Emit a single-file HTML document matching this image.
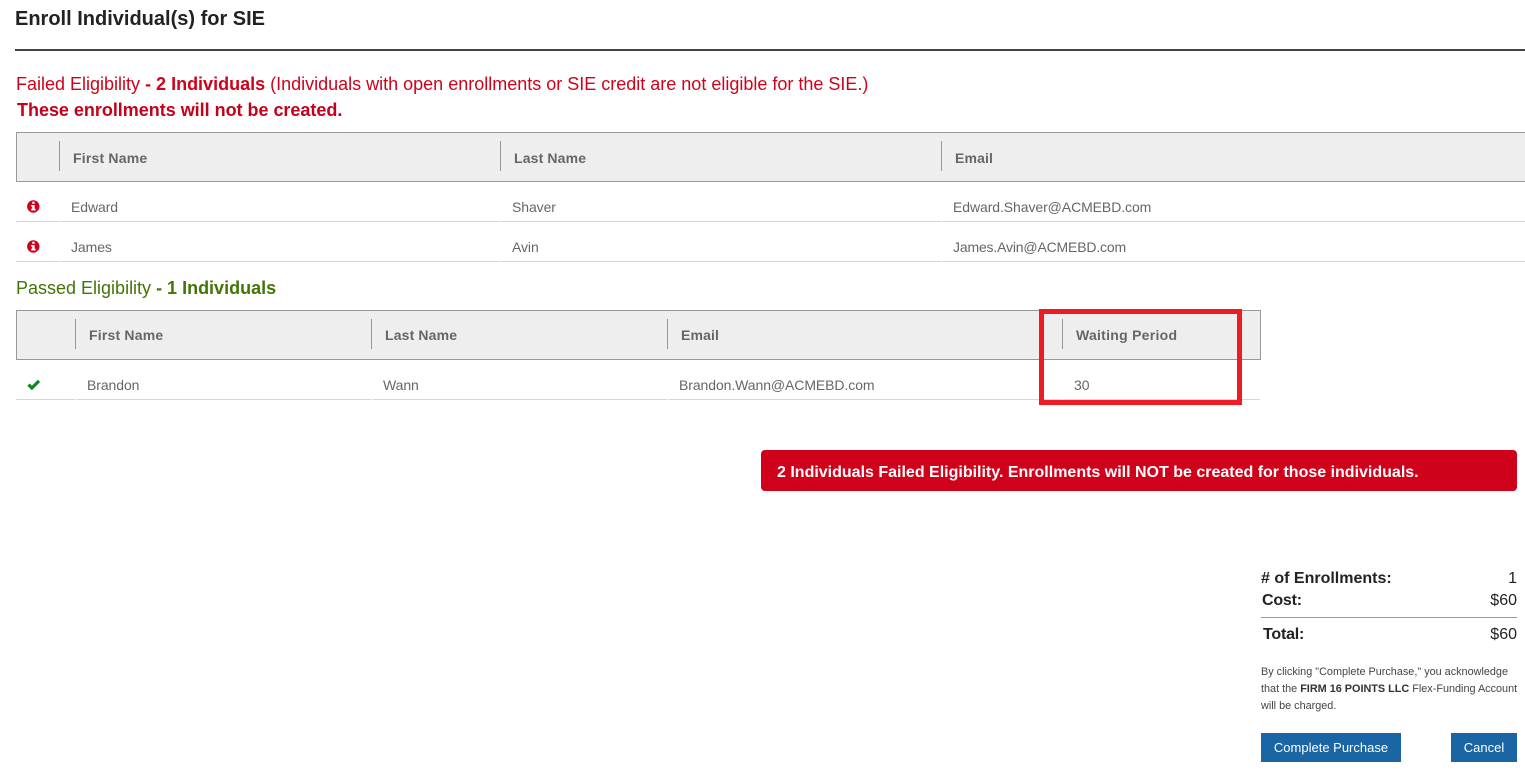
<!DOCTYPE html>
<html><head><meta charset="utf-8">
<style>
html,body{margin:0;padding:0;background:#fff;width:1525px;height:778px;overflow:hidden;font-family:"Liberation Sans",Arial,sans-serif}
.a{position:absolute;white-space:nowrap}
.h{position:absolute;background:#eee;border:1px solid #999;box-sizing:border-box}
.s{position:absolute;width:1px;height:30px;background:#999}
.th{position:absolute;white-space:nowrap;font-size:14px;font-weight:bold;color:#666;line-height:16px;letter-spacing:.15px}
.td{position:absolute;white-space:nowrap;font-size:14px;color:#666;line-height:16px;letter-spacing:-.08px}
.l{position:absolute;height:1px;background:#d5d5d5}
b{font-weight:bold}
.btn{position:absolute;background:#1a65a3;color:#fff;font-size:13px;text-align:center;height:29px;line-height:29px;top:733px}
</style></head><body>
<div class="a" style="left:15px;top:8px;font-size:20px;font-weight:bold;line-height:22px;color:#222">Enroll Individual(s) for SIE</div>
<div class="a" style="left:15px;top:49px;width:1510px;height:2px;background:#444"></div>

<div class="a" style="left:16px;top:73px;font-size:18px;line-height:22px;color:#d0021b">Failed Eligibility <b>- 2 Individuals</b> (Individuals with open enrollments or SIE credit are not eligible for the SIE.)</div>
<div class="a" style="left:17px;top:99px;font-size:18px;line-height:22px;font-weight:bold;color:#c4001a;letter-spacing:-.02px">These enrollments will not be created.</div>

<div class="h" style="left:16px;top:132px;width:1510px;height:50px;border-right:0"></div>
<div class="s" style="left:59px;top:141px"></div>
<div class="s" style="left:500px;top:141px"></div>
<div class="s" style="left:941px;top:141px"></div>
<div class="th" style="left:73px;top:150px;letter-spacing:.2px">First Name</div>
<div class="th" style="left:514px;top:150px">Last Name</div>
<div class="th" style="left:955px;top:150px">Email</div>

<svg class="a" style="left:27px;top:200px" width="13" height="13" viewBox="0 0 13 13"><circle cx="6.3" cy="6.500" r="6.200" fill="#d0021b"/><path d="M5.200 1.800h2.400v2H5.200zM4.200 5h3.400v3.800h1v1.700H4.200V8.800h1V6.700h-1z" fill="#fff"/></svg>
<div class="td" style="left:71px;top:199px">Edward</div>
<div class="td" style="left:512px;top:199px">Shaver</div>
<div class="td" style="left:953px;top:199px">Edward.Shaver@ACMEBD.com</div>
<div class="l" style="left:16px;top:221px;width:43px"></div>
<div class="l" style="left:60px;top:221px;width:440px"></div>
<div class="l" style="left:501px;top:221px;width:440px"></div>
<div class="l" style="left:942px;top:221px;width:583px"></div>

<svg class="a" style="left:27px;top:240px" width="13" height="13" viewBox="0 0 13 13"><circle cx="6.300" cy="6.500" r="6.200" fill="#d0021b"/><path d="M5.200 1.800h2.400v2H5.200zM4.200 5h3.400v3.800h1v1.700H4.200V8.800h1V6.700h-1z" fill="#fff"/></svg>
<div class="td" style="left:71px;top:239px">James</div>
<div class="td" style="left:512px;top:239px">Avin</div>
<div class="td" style="left:953px;top:239px;letter-spacing:-.17px">James.Avin@ACMEBD.com</div>
<div class="l" style="left:16px;top:261px;width:43px"></div>
<div class="l" style="left:60px;top:261px;width:440px"></div>
<div class="l" style="left:501px;top:261px;width:440px"></div>
<div class="l" style="left:942px;top:261px;width:583px"></div>

<div class="a" style="left:16px;top:277px;font-size:18px;line-height:22px;color:#417505">Passed Eligibility <b>- 1 Individuals</b></div>

<div class="h" style="left:16px;top:310px;width:1245px;height:50px"></div>
<div class="s" style="left:75px;top:319px"></div>
<div class="s" style="left:371px;top:319px"></div>
<div class="s" style="left:667px;top:319px"></div>
<div class="s" style="left:1062px;top:319px"></div>
<div class="th" style="left:89px;top:327px;letter-spacing:.2px">First Name</div>
<div class="th" style="left:385px;top:327px">Last Name</div>
<div class="th" style="left:681px;top:327px">Email</div>
<div class="th" style="left:1076px;top:327px;letter-spacing:.27px">Waiting Period</div>

<svg class="a" style="left:27px;top:379px" width="14" height="12" viewBox="0 0 14 12"><path d="M1.500 5.600 4.900 9 12 1.900" fill="none" stroke="#0a8a1e" stroke-width="3.200"/></svg>
<div class="td" style="left:87px;top:377px">Brandon</div>
<div class="td" style="left:383px;top:377px">Wann</div>
<div class="td" style="left:679px;top:377px">Brandon.Wann@ACMEBD.com</div>
<div class="td" style="left:1074px;top:377px">30</div>
<div class="l" style="left:16px;top:399px;width:59px"></div>
<div class="l" style="left:76px;top:399px;width:295px"></div>
<div class="l" style="left:372px;top:399px;width:295px"></div>
<div class="l" style="left:668px;top:399px;width:394px"></div>
<div class="l" style="left:1063px;top:399px;width:197px"></div>

<div class="a" style="left:1039px;top:309px;width:203px;height:96px;box-sizing:border-box;border:5px solid #ed1c24"></div>

<div class="a" style="left:761px;top:450px;width:756px;height:41px;background:#d0021b;border-radius:4px;color:#fff;font-size:16px;font-weight:bold;line-height:45px;text-indent:16px">2 Individuals Failed Eligibility. Enrollments will NOT be created for those individuals.</div>

<div class="a" style="left:1261px;top:569px;font-size:16px;font-weight:bold;line-height:20px;color:#222"># of Enrollments:</div>
<div class="a" style="right:8px;top:569px;font-size:16px;line-height:20px;color:#222">1</div>
<div class="a" style="left:1262px;top:591px;font-size:16px;font-weight:bold;line-height:20px;color:#222;letter-spacing:-.2px">Cost:</div>
<div class="a" style="right:8px;top:591px;font-size:16px;line-height:20px;color:#222">$60</div>
<div class="a" style="left:1261px;top:617px;width:256px;height:1px;background:#999"></div>
<div class="a" style="left:1263px;top:625px;font-size:16px;font-weight:bold;line-height:20px;color:#222;letter-spacing:-.2px">Total:</div>
<div class="a" style="right:8px;top:625px;font-size:16px;line-height:20px;color:#222">$60</div>

<div class="a" style="left:1261px;top:664px;font-size:10.850px;line-height:17px;color:#444">By clicking "Complete Purchase," you acknowledge<br>that the <b style="color:#333">FIRM 16 POINTS LLC</b> Flex-Funding Account<br>will be charged.</div>

<div class="btn" style="left:1261px;width:140px">Complete Purchase</div>
<div class="btn" style="left:1451px;width:66px">Cancel</div>
</body></html>
